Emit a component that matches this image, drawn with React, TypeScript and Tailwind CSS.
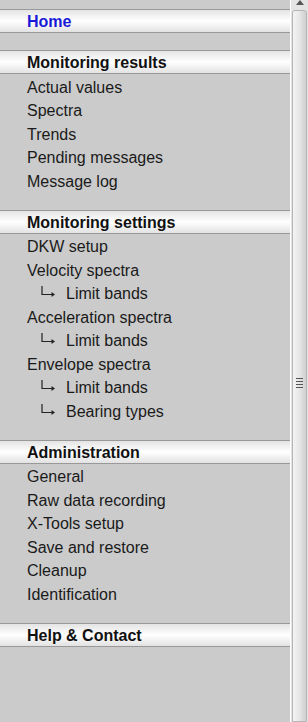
import React from "react"

type Item = { label: string; sub?: boolean }

const sections: { title: string; items: Item[] }[] = [
  {
    title: "Monitoring results",
    items: [
      { label: "Actual values" },
      { label: "Spectra" },
      { label: "Trends" },
      { label: "Pending messages" },
      { label: "Message log" },
    ],
  },
  {
    title: "Monitoring settings",
    items: [
      { label: "DKW setup" },
      { label: "Velocity spectra" },
      { label: "Limit bands", sub: true },
      { label: "Acceleration spectra" },
      { label: "Limit bands", sub: true },
      { label: "Envelope spectra" },
      { label: "Limit bands", sub: true },
      { label: "Bearing types", sub: true },
    ],
  },
  {
    title: "Administration",
    items: [
      { label: "General" },
      { label: "Raw data recording" },
      { label: "X-Tools setup" },
      { label: "Save and restore" },
      { label: "Cleanup" },
      { label: "Identification" },
    ],
  },
]

function Bar({ children, blue }: { children: React.ReactNode; blue?: boolean }) {
  return (
    <div
      className={`h-[24px] flex items-center pl-[27px] pt-[2px] border-y border-[#999999] bg-gradient-to-b from-[#e4e4e4] via-white to-[#e2e2e2] font-bold text-[16px] ${blue ? "text-[#1a1ad6]" : "text-[#111111]"}`}
    >
      {children}
    </div>
  )
}

function SubArrow() {
  return (
    <svg width="15" height="11" viewBox="0 0 15 11" className="mr-[10px] mb-[5px] shrink-0">
      <path d="M1 0V8.5H11" stroke="#222" strokeWidth="1.2" fill="none" />
      <path d="M10.5 6L14 8.5L10.5 11Z" fill="#222" />
    </svg>
  )
}

export default function App() {
  return (
    <div
      className="h-[722px] w-[308px] overflow-hidden flex bg-[#cbcbcb]"
      style={{ fontFamily: '"Liberation Sans", Arial, sans-serif' }}
    >
      <div className="flex-1 pt-[9px]">
        <div className="mb-[17px]">
          <Bar blue>Home</Bar>
        </div>

        {sections.map((s) => (
          <div key={s.title} className="pb-[18px]">
            <Bar>{s.title}</Bar>
            {s.items.map((it, i) => (
              <div
                key={i}
                className={`h-[23.5px] flex items-center pt-[4px] text-[16px] text-[#1a1a1a] ${it.sub ? "pl-[41px]" : "pl-[27px]"}`}
              >
                {it.sub && <SubArrow />}
                {it.label}
              </div>
            ))}
          </div>
        ))}

        <Bar>Help &amp; Contact</Bar>
      </div>

      {/* scrollbar */}
      <div className="w-[18px] flex flex-col bg-[#e4e4e4] border-l border-white">
        <div className="h-[10px] flex justify-center">
          <svg width="8" height="5" viewBox="0 0 8 5">
            <path d="M0 5L4 0L8 5Z" fill="#555" />
          </svg>
        </div>
        <div className="flex-1 mx-[1px] rounded-t-[3px] border border-[#b5b5b5] bg-gradient-to-r from-[#f4f4f4] via-[#e6e6e6] to-[#cfcfcf] pt-[367px] flex flex-col items-center gap-[2px]">
          <div className="w-[7px] h-[1px] bg-[#555]" />
          <div className="w-[7px] h-[1px] bg-[#555]" />
          <div className="w-[7px] h-[1px] bg-[#555]" />
          <div className="w-[7px] h-[1px] bg-[#555]" />
        </div>
      </div>
    </div>
  )
}
